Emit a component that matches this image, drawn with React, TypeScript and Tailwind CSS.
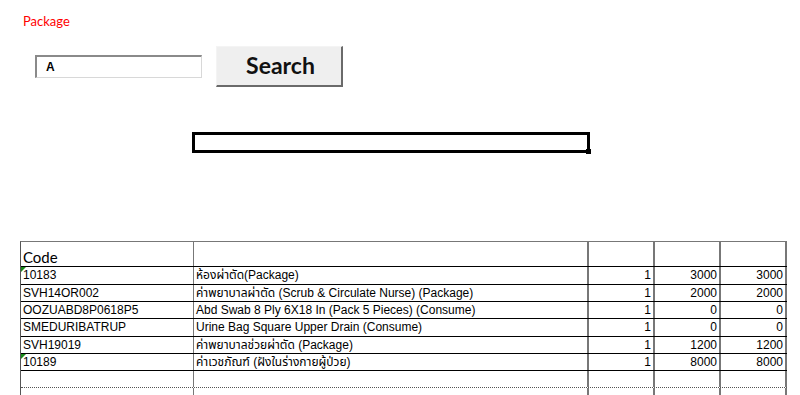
import React from "react";

type Row = { code: string; name: string; qty: string; price: string; total: string; flag?: boolean; h: number };

const rows: Row[] = [
  { code: "10183", name: "ห้องผ่าตัด(Package)", qty: "1", price: "3000", total: "3000", flag: true, h: 18 },
  { code: "SVH14OR002", name: "ค่าพยาบาลผ่าตัด (Scrub & Circulate Nurse) (Package)", qty: "1", price: "2000", total: "2000", h: 17 },
  { code: "OOZUABD8P0618P5", name: "Abd Swab 8 Ply 6X18 In (Pack 5 Pieces) (Consume)", qty: "1", price: "0", total: "0", h: 17 },
  { code: "SMEDURIBATRUP", name: "Urine Bag Square Upper Drain (Consume)", qty: "1", price: "0", total: "0", h: 18 },
  { code: "SVH19019", name: "ค่าพยาบาลช่วยผ่าตัด (Package)", qty: "1", price: "1200", total: "1200", h: 17 },
  { code: "10189", name: "ค่าเวชภัณฑ์ (ฝังในร่างกายผู้ป่วย)", qty: "1", price: "8000", total: "8000", flag: true, h: 17 },
];

const cellFont = { fontFamily: '"Liberation Sans", "Noto Sans Thai", "Noto Sans", sans-serif' };
const calibri = { fontFamily: 'Lato, "Open Sans", sans-serif' };

function Flag() {
  return (
    <span className="absolute left-0 top-0 h-0 w-0 border-t-[5px] border-r-[5px] border-t-[#1a8a1a] border-r-transparent" />
  );
}

function EmptyCells() {
  return (
    <>
      <div className="w-[173px] border-r border-r-[#777]" />
      <div className="w-[395px] border-r-2 border-r-[#777]" />
      <div className="w-[66px] border-r-2 border-r-[#777]" />
      <div className="w-[66px] border-r-2 border-r-[#777]" />
      <div className="w-[66px] border-r-2 border-r-[#777]" />
    </>
  );
}

export default function App() {
  return (
    <div className="relative h-[395px] w-[800px] overflow-hidden bg-white">
      <div className="pl-[23px] pt-[12px] text-[13px] text-[#ff0000]" style={calibri}>
        Package
      </div>

      <div className="mt-[14px] flex items-start">
        <div className="ml-[35px] mt-[9px] flex h-[23px] w-[167px] items-center border-t-2 border-l-2 border-b border-r border-t-[#8a8a8a] border-l-[#8a8a8a] border-b-[#d8d8d8] border-r-[#d8d8d8] bg-white pl-[9px]">
          <span className="text-[12px] font-bold text-black" style={cellFont}>
            A
          </span>
        </div>
        <div
          className="ml-[14px] flex h-[41px] w-[127px] items-center justify-center border-r-2 border-b-2 border-t border-l border-r-[#6a6a6a] border-b-[#6a6a6a] border-t-[#f4f4f4] border-l-[#f4f4f4] bg-[#efefef] pl-[3px] text-[23px] font-bold text-[#111]"
          style={calibri}
        >
          Search
        </div>
      </div>

      <div className="relative ml-[192px] mt-[45px] h-[21px] w-[398px] border-[3px] border-black">
        <span className="absolute -bottom-[4px] -right-[4px] h-[5px] w-[5px] bg-black" />
      </div>

      <div className="ml-[20px] mt-[88px] w-[767px] border-l border-t border-l-[#555] border-t-[#777]" style={cellFont}>
        <div className="flex h-[25px] border-b border-b-black">
          <div className="flex w-[173px] items-end border-r border-r-[#777] pb-[1px] pl-[2px] text-[15px] leading-none text-black" style={calibri}>
            Code
          </div>
          <div className="w-[395px] border-r-2 border-r-[#777]" />
          <div className="w-[66px] border-r-2 border-r-[#777]" />
          <div className="w-[66px] border-r-2 border-r-[#777]" />
          <div className="w-[66px] border-r-2 border-r-[#777]" />
        </div>
        {rows.map((r) => (
          <div key={r.code} className="flex border-b border-b-black text-[12px] leading-none text-black" style={{ height: r.h }}>
            <div className="relative flex w-[173px] items-center border-r border-r-[#777] pl-[2px]">
              {r.flag && <Flag />}
              {r.code}
            </div>
            <div className="flex w-[395px] items-center whitespace-nowrap border-r-2 border-r-[#777] pl-[2px]">{r.name}</div>
            <div className="flex w-[66px] items-center justify-end border-r-2 border-r-[#777] pr-[2px]">{r.qty}</div>
            <div className="flex w-[66px] items-center justify-end border-r-2 border-r-[#777] pr-[2px]">{r.price}</div>
            <div className="flex w-[66px] items-center justify-end border-r-2 border-r-[#777] pr-[2px]">{r.total}</div>
          </div>
        ))}
        <div className="flex h-[17px] border-b border-dotted border-b-[#555]">
          <EmptyCells />
        </div>
        <div className="flex h-[20px]">
          <EmptyCells />
        </div>
      </div>
    </div>
  );
}
